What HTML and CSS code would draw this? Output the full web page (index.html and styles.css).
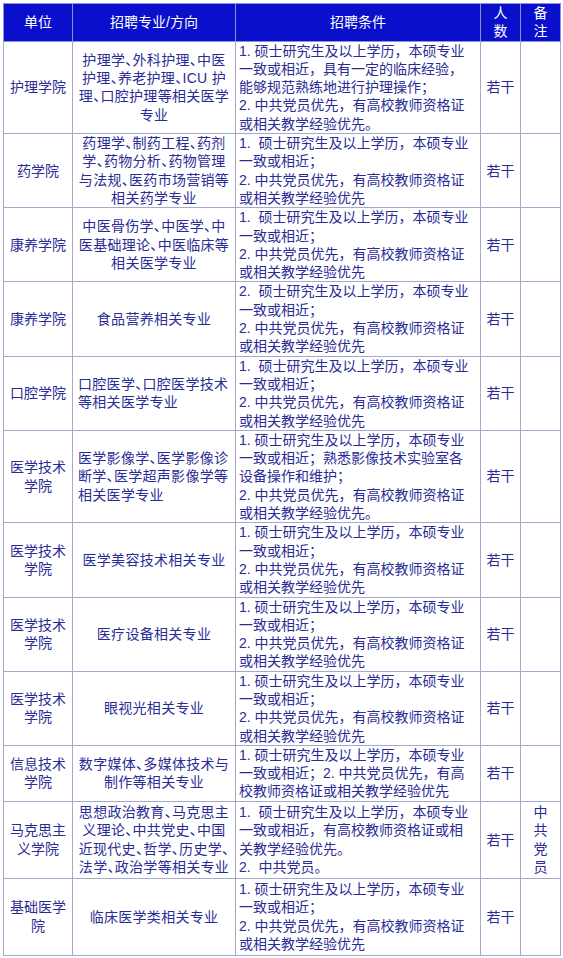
FILE: index.html
```html
<!DOCTYPE html>
<html lang="zh-CN">
<head>
<meta charset="utf-8">
<title>招聘计划</title>
<link rel="stylesheet" href="styles.css">
</head>
<body>
<table class="plan">
  <colgroup>
    <col class="c-unit"><col class="c-major"><col class="c-cond"><col class="c-num"><col class="c-note">
  </colgroup>
  <thead>
    <tr class="head">
      <th>单位</th>
      <th>招聘专业/方向</th>
      <th>招聘条件</th>
      <th>人<br>数</th>
      <th>备<br>注</th>
    </tr>
  </thead>
  <tbody>
    <tr>
      <td class="unit">护理学院</td>
      <td class="major">护理学、外科护理、中医<br>护理、养老护理、ICU 护<br>理、口腔护理等相关医学<br>专业</td>
      <td class="cond">1. 硕士研究生及以上学历，本硕专业<br>一致或相近，具有一定的临床经验，<br>能够规范熟练地进行护理操作；<br>2. 中共党员优先，有高校教师资格证<br>或相关教学经验优先。</td>
      <td class="num">若干</td>
      <td class="note"></td>
    </tr>
    <tr>
      <td class="unit">药学院</td>
      <td class="major">药理学、制药工程、药剂<br>学、药物分析、药物管理<br>与法规、医药市场营销等<br>相关药学专业</td>
      <td class="cond">1.&nbsp; 硕士研究生及以上学历，本硕专业<br>一致或相近；<br>2. 中共党员优先，有高校教师资格证<br>或相关教学经验优先</td>
      <td class="num">若干</td>
      <td class="note"></td>
    </tr>
    <tr>
      <td class="unit">康养学院</td>
      <td class="major">中医骨伤学、中医学、中<br>医基础理论、中医临床等<br>相关医学专业</td>
      <td class="cond">1.&nbsp; 硕士研究生及以上学历，本硕专业<br>一致或相近；<br>2. 中共党员优先，有高校教师资格证<br>或相关教学经验优先</td>
      <td class="num">若干</td>
      <td class="note"></td>
    </tr>
    <tr>
      <td class="unit">康养学院</td>
      <td class="major">食品营养相关专业</td>
      <td class="cond">2.&nbsp; 硕士研究生及以上学历，本硕专业<br>一致或相近；<br>2. 中共党员优先，有高校教师资格证<br>或相关教学经验优先</td>
      <td class="num">若干</td>
      <td class="note"></td>
    </tr>
    <tr>
      <td class="unit">口腔学院</td>
      <td class="major left">口腔医学、口腔医学技术<br>等相关医学专业</td>
      <td class="cond">1.&nbsp; 硕士研究生及以上学历，本硕专业<br>一致或相近；<br>2. 中共党员优先，有高校教师资格证<br>或相关教学经验优先</td>
      <td class="num">若干</td>
      <td class="note"></td>
    </tr>
    <tr>
      <td class="unit">医学技术<br>学院</td>
      <td class="major left">医学影像学、医学影像诊<br>断学、医学超声影像学等<br>相关医学专业</td>
      <td class="cond">1. 硕士研究生及以上学历，本硕专业<br>一致或相近；熟悉影像技术实验室各<br>设备操作和维护；<br>2. 中共党员优先，有高校教师资格证<br>或相关教学经验优先。</td>
      <td class="num">若干</td>
      <td class="note"></td>
    </tr>
    <tr>
      <td class="unit">医学技术<br>学院</td>
      <td class="major">医学美容技术相关专业</td>
      <td class="cond">1. 硕士研究生及以上学历，本硕专业<br>一致或相近；<br>2. 中共党员优先，有高校教师资格证<br>或相关教学经验优先</td>
      <td class="num">若干</td>
      <td class="note"></td>
    </tr>
    <tr>
      <td class="unit">医学技术<br>学院</td>
      <td class="major">医疗设备相关专业</td>
      <td class="cond">1. 硕士研究生及以上学历，本硕专业<br>一致或相近；<br>2. 中共党员优先，有高校教师资格证<br>或相关教学经验优先</td>
      <td class="num">若干</td>
      <td class="note"></td>
    </tr>
    <tr>
      <td class="unit">医学技术<br>学院</td>
      <td class="major">眼视光相关专业</td>
      <td class="cond">1. 硕士研究生及以上学历，本硕专业<br>一致或相近；<br>2. 中共党员优先，有高校教师资格证<br>或相关教学经验优先</td>
      <td class="num">若干</td>
      <td class="note"></td>
    </tr>
    <tr>
      <td class="unit">信息技术<br>学院</td>
      <td class="major">数字媒体、多媒体技术与<br>制作等相关专业</td>
      <td class="cond">1. 硕士研究生及以上学历，本硕专业<br>一致或相近；2. 中共党员优先，有高<br>校教师资格证或相关教学经验优先</td>
      <td class="num">若干</td>
      <td class="note"></td>
    </tr>
    <tr class="roomy">
      <td class="unit">马克思主<br>义学院</td>
      <td class="major">思想政治教育、马克思主<br>义理论、中共党史、中国<br>近现代史、哲学、历史学、<br>法学、政治学等相关专业</td>
      <td class="cond">1.&nbsp; 硕士研究生及以上学历，本硕专业<br>一致或相近，有高校教师资格证或相<br>关教学经验优先。<br>2.&nbsp; 中共党员。</td>
      <td class="num">若干</td>
      <td class="note">中<br>共<br>党<br>员</td>
    </tr>
    <tr class="roomy">
      <td class="unit">基础医学<br>院</td>
      <td class="major">临床医学类相关专业</td>
      <td class="cond">1. 硕士研究生及以上学历，本硕专业<br>一致或相近；<br>2. 中共党员优先，有高校教师资格证<br>或相关教学经验优先</td>
      <td class="num">若干</td>
      <td class="note"></td>
    </tr>
  </tbody>
</table>
</body>
</html>
```

FILE: styles.css
```css
html, body {
  margin: 0;
  padding: 0;
  background: #ffffff;
}

body {
  padding: 3px 0 0 3px;
  font-family: "Liberation Sans", "Noto Sans CJK SC", sans-serif;
  font-size: 14px;
  color: #2a2c96;
}

.plan {
  border-collapse: collapse;
  table-layout: fixed;
  width: 557px;
}

.c-unit { width: 69px; }
.c-major { width: 163px; }
.c-cond { width: 245px; }
.c-num { width: 40px; }
.c-note { width: 40px; }

.plan th,
.plan td {
  border: 1px solid #a7a8cc;
  padding: 0 3px;
  line-height: 18.3px;
  vertical-align: middle;
  white-space: nowrap;
  overflow: hidden;
}

.head th {
  background: #0a0fcc;
  color: #ffffff;
  font-weight: 400;
  text-align: center;
  border-color: #8d90d6;
}

.unit { text-align: center; padding: 0 2px; }

.major {
  text-align: center;
  padding: 0 2px;
  font-feature-settings: "halt";
  letter-spacing: 0.3px;
}
.major.left { text-align: left; padding-left: 5px; }

.cond { text-align: left; padding-left: 4px; }
.num { text-align: center; }
.note { text-align: center; }

.roomy td { height: 76px; }
```
